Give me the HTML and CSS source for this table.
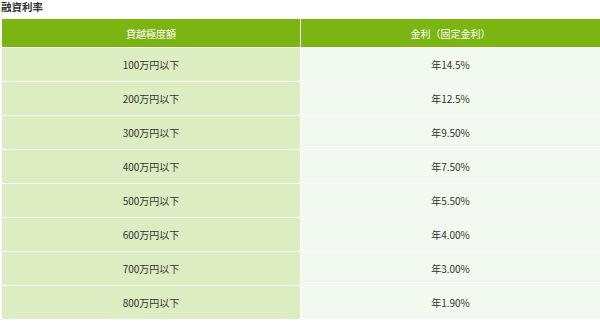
FILE: index.html
```html
<!DOCTYPE html>
<html lang="ja">
<head>
<meta charset="utf-8">
<title>融資利率</title>
<link rel="stylesheet" href="styles.css">
</head>
<body>
<h3 class="title">融資利率</h3>
<table class="rates">
  <thead>
    <tr><th>貸越極度額</th><th>金利（固定金利）</th></tr>
  </thead>
  <tbody>
    <tr><td class="limit">100万円以下</td><td class="rate">年14.5%</td></tr>
    <tr><td class="limit">200万円以下</td><td class="rate">年12.5%</td></tr>
    <tr><td class="limit">300万円以下</td><td class="rate">年9.50%</td></tr>
    <tr><td class="limit">400万円以下</td><td class="rate">年7.50%</td></tr>
    <tr><td class="limit">500万円以下</td><td class="rate">年5.50%</td></tr>
    <tr><td class="limit">600万円以下</td><td class="rate">年4.00%</td></tr>
    <tr><td class="limit">700万円以下</td><td class="rate">年3.00%</td></tr>
    <tr><td class="limit">800万円以下</td><td class="rate">年1.90%</td></tr>
  </tbody>
</table>
</body>
</html>
```

FILE: styles.css
```css
html, body {
  margin: 0;
  padding: 0;
  background: #ffffff;
  overflow: hidden;
}
body {
  font-family: "Noto Sans CJK JP", "Noto Sans", sans-serif;
  color: #333333;
  font-size: 10px;
}
.title {
  margin: 0;
  padding: 0 0 0 1px;
  height: 19px;
  line-height: 14px;
  font-size: 10.5px;
  font-weight: bold;
  color: #333333;
}
.rates {
  margin-left: 2px;
  width: 598px;
  border-collapse: collapse;
  table-layout: fixed;
}
.rates th,
.rates td {
  text-align: center;
  padding: 0;
  border-bottom: 1px solid #ffffff;
  font-weight: normal;
}
.rates th:first-child,
.rates td:first-child {
  border-right: 1px solid #ffffff;
  width: 298px;
}
.rates th {
  background: #7ab512;
  color: #ffffff;
  height: 28px;
  font-size: 10px;
}
.rates td {
  height: 33px;
  font-size: 10px;
}
.rates td.limit {
  background: #dcedc1;
}
.rates td.rate {
  background: #f2f9ee;
}
```
